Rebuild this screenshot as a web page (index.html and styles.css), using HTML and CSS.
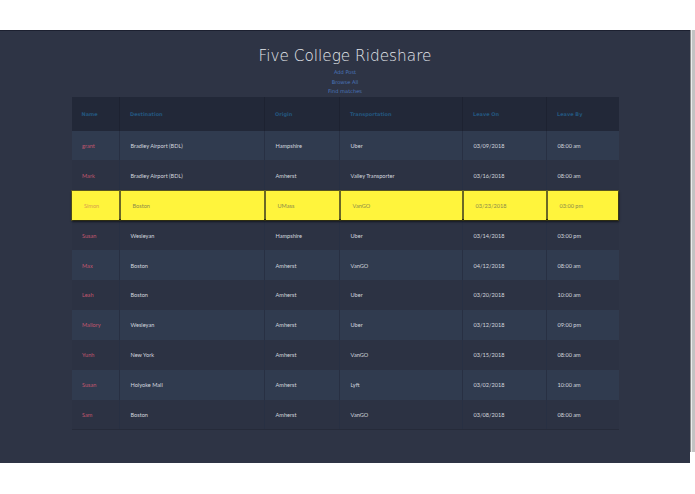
FILE: index.html
```html
<!DOCTYPE html>
<html>
<head>
<meta charset="utf-8">
<link rel="stylesheet" href="styles.css">
</head>
<body>
<div class="frame">
  <main class="page">
    <h1 class="title">Five College Rideshare</h1>
    <nav class="links">
      <a href="#">Add Post</a>
      <a href="#">Browse All</a>
      <a href="#">Find matches</a>
    </nav>
    <table class="rides">
      <colgroup>
        <col class="c1"><col class="c2"><col class="c3"><col class="c4"><col class="c5"><col class="c6">
      </colgroup>
      <thead>
        <tr><th>Name</th><th>Destination</th><th>Origin</th><th>Transportation</th><th>Leave On</th><th>Leave By</th></tr>
      </thead>
      <tbody>
        <tr><td class="name">grant</td><td>Bradley Airport (BDL)</td><td>Hampshire</td><td>Uber</td><td>03/09/2018</td><td>08:00 am</td></tr>
        <tr><td class="name">Mark</td><td>Bradley Airport (BDL)</td><td>Amherst</td><td>Valley Transporter</td><td>03/16/2018</td><td>08:00 am</td></tr>
        <tr class="hover"><td class="name">Simon</td><td>Boston</td><td>UMass</td><td>VanGO</td><td>03/23/2018</td><td>03:00 pm</td></tr>
        <tr><td class="name">Susan</td><td>Wesleyan</td><td>Hampshire</td><td>Uber</td><td>03/14/2018</td><td>03:00 pm</td></tr>
        <tr><td class="name">Max</td><td>Boston</td><td>Amherst</td><td>VanGO</td><td>04/12/2018</td><td>08:00 am</td></tr>
        <tr><td class="name">Leah</td><td>Boston</td><td>Amherst</td><td>Uber</td><td>03/20/2018</td><td>10:00 am</td></tr>
        <tr><td class="name">Mallory</td><td>Wesleyan</td><td>Amherst</td><td>Uber</td><td>03/12/2018</td><td>09:00 pm</td></tr>
        <tr><td class="name">Yunh</td><td>New York</td><td>Amherst</td><td>VanGO</td><td>03/15/2018</td><td>08:00 am</td></tr>
        <tr><td class="name">Susan</td><td>Holyoke Mall</td><td>Amherst</td><td>Lyft</td><td>03/02/2018</td><td>10:00 am</td></tr>
        <tr><td class="name">Sam</td><td>Boston</td><td>Amherst</td><td>VanGO</td><td>03/08/2018</td><td>08:00 am</td></tr>
      </tbody>
    </table>
  </main>
  <div class="scrollbar"><div class="thumb"></div></div>
</div>
</body>
</html>
```

FILE: styles.css
```css
html, body {
  margin: 0;
  padding: 0;
  background: #ffffff;
}

.frame {
  margin-top: 30px;
  height: 433px;
  display: flex;
}

.page {
  width: 690px;
  background: #2e3445;
  border-top: 1px solid #1c2030;
  box-sizing: border-box;
  display: flex;
  flex-direction: column;
  align-items: center;
}

.title {
  margin: 16px 0 0;
  font-family: "DejaVu Sans", sans-serif;
  font-weight: 200;
  font-size: 15.3px;
  line-height: 18px;
  color: #e4e7ec;
}

.links {
  margin-top: 3px;
  display: flex;
  flex-direction: column;
  align-items: center;
}

.links a {
  font-family: "DejaVu Sans", sans-serif;
  font-size: 5.1px;
  line-height: 9.5px;
  color: #4a74bb;
  text-decoration: none;
}

.rides {
  width: 547px;
  border-collapse: collapse;
  table-layout: fixed;
}

.c1 { width: 48px; }
.c2 { width: 145px; }
.c3 { width: 75px; }
.c4 { width: 123px; }
.c5 { width: 84px; }
.c6 { width: 72px; }

.rides th {
  height: 34px;
  padding: 0 0 0 10px;
  background: #222838;
  border-left: 1px solid #1d2231;
  font-family: "DejaVu Sans", sans-serif;
  font-weight: bold;
  font-size: 5px;
  color: #24567e;
  text-align: left;
  box-sizing: border-box;
}

.rides th:first-child,
.rides td:first-child {
  border-left: none;
}

.rides td {
  height: 29.9px;
  padding: 0 0 0 10.5px;
  border-left: 1px solid #283043;
  font-family: Lato, sans-serif;
  font-size: 5.6px;
  color: #d3d7df;
  box-sizing: border-box;
  white-space: nowrap;
}

.rides tbody tr {
  background: #2c3243;
}

.rides tbody tr:nth-child(odd) {
  background: #303b4f;
}

.rides tbody tr:last-child td {
  border-bottom: 1px solid #262b3a;
}

.rides td.name {
  color: #c0566e;
}

.rides tbody tr.hover {
  background: #fff43c;
  box-shadow: 0 2px 2px rgba(0, 0, 0, 0.55);
  position: relative;
}

.rides tr.hover td {
  border-top: 1px solid #5d5a22;
  border-bottom: 1px solid #5d5a22;
  border-left: 2px solid #6b6826;
  padding-left: 12px;
  color: #8c8a4a;
}

.rides tr.hover td:first-child {
  border-left: 1px solid #5d5a22;
}

.rides tr.hover td:last-child {
  border-right: 1px solid #5d5a22;
}

.rides tr.hover td.name {
  color: #d6a04e;
}

.scrollbar {
  width: 5px;
  background: #ececec;
  border-left: 1px solid #8a8a8a;
  box-sizing: border-box;
  height: 422px;
  padding-left: 1px;
}

.thumb {
  height: 100%;
  background: #c3c3c3;
}
```
